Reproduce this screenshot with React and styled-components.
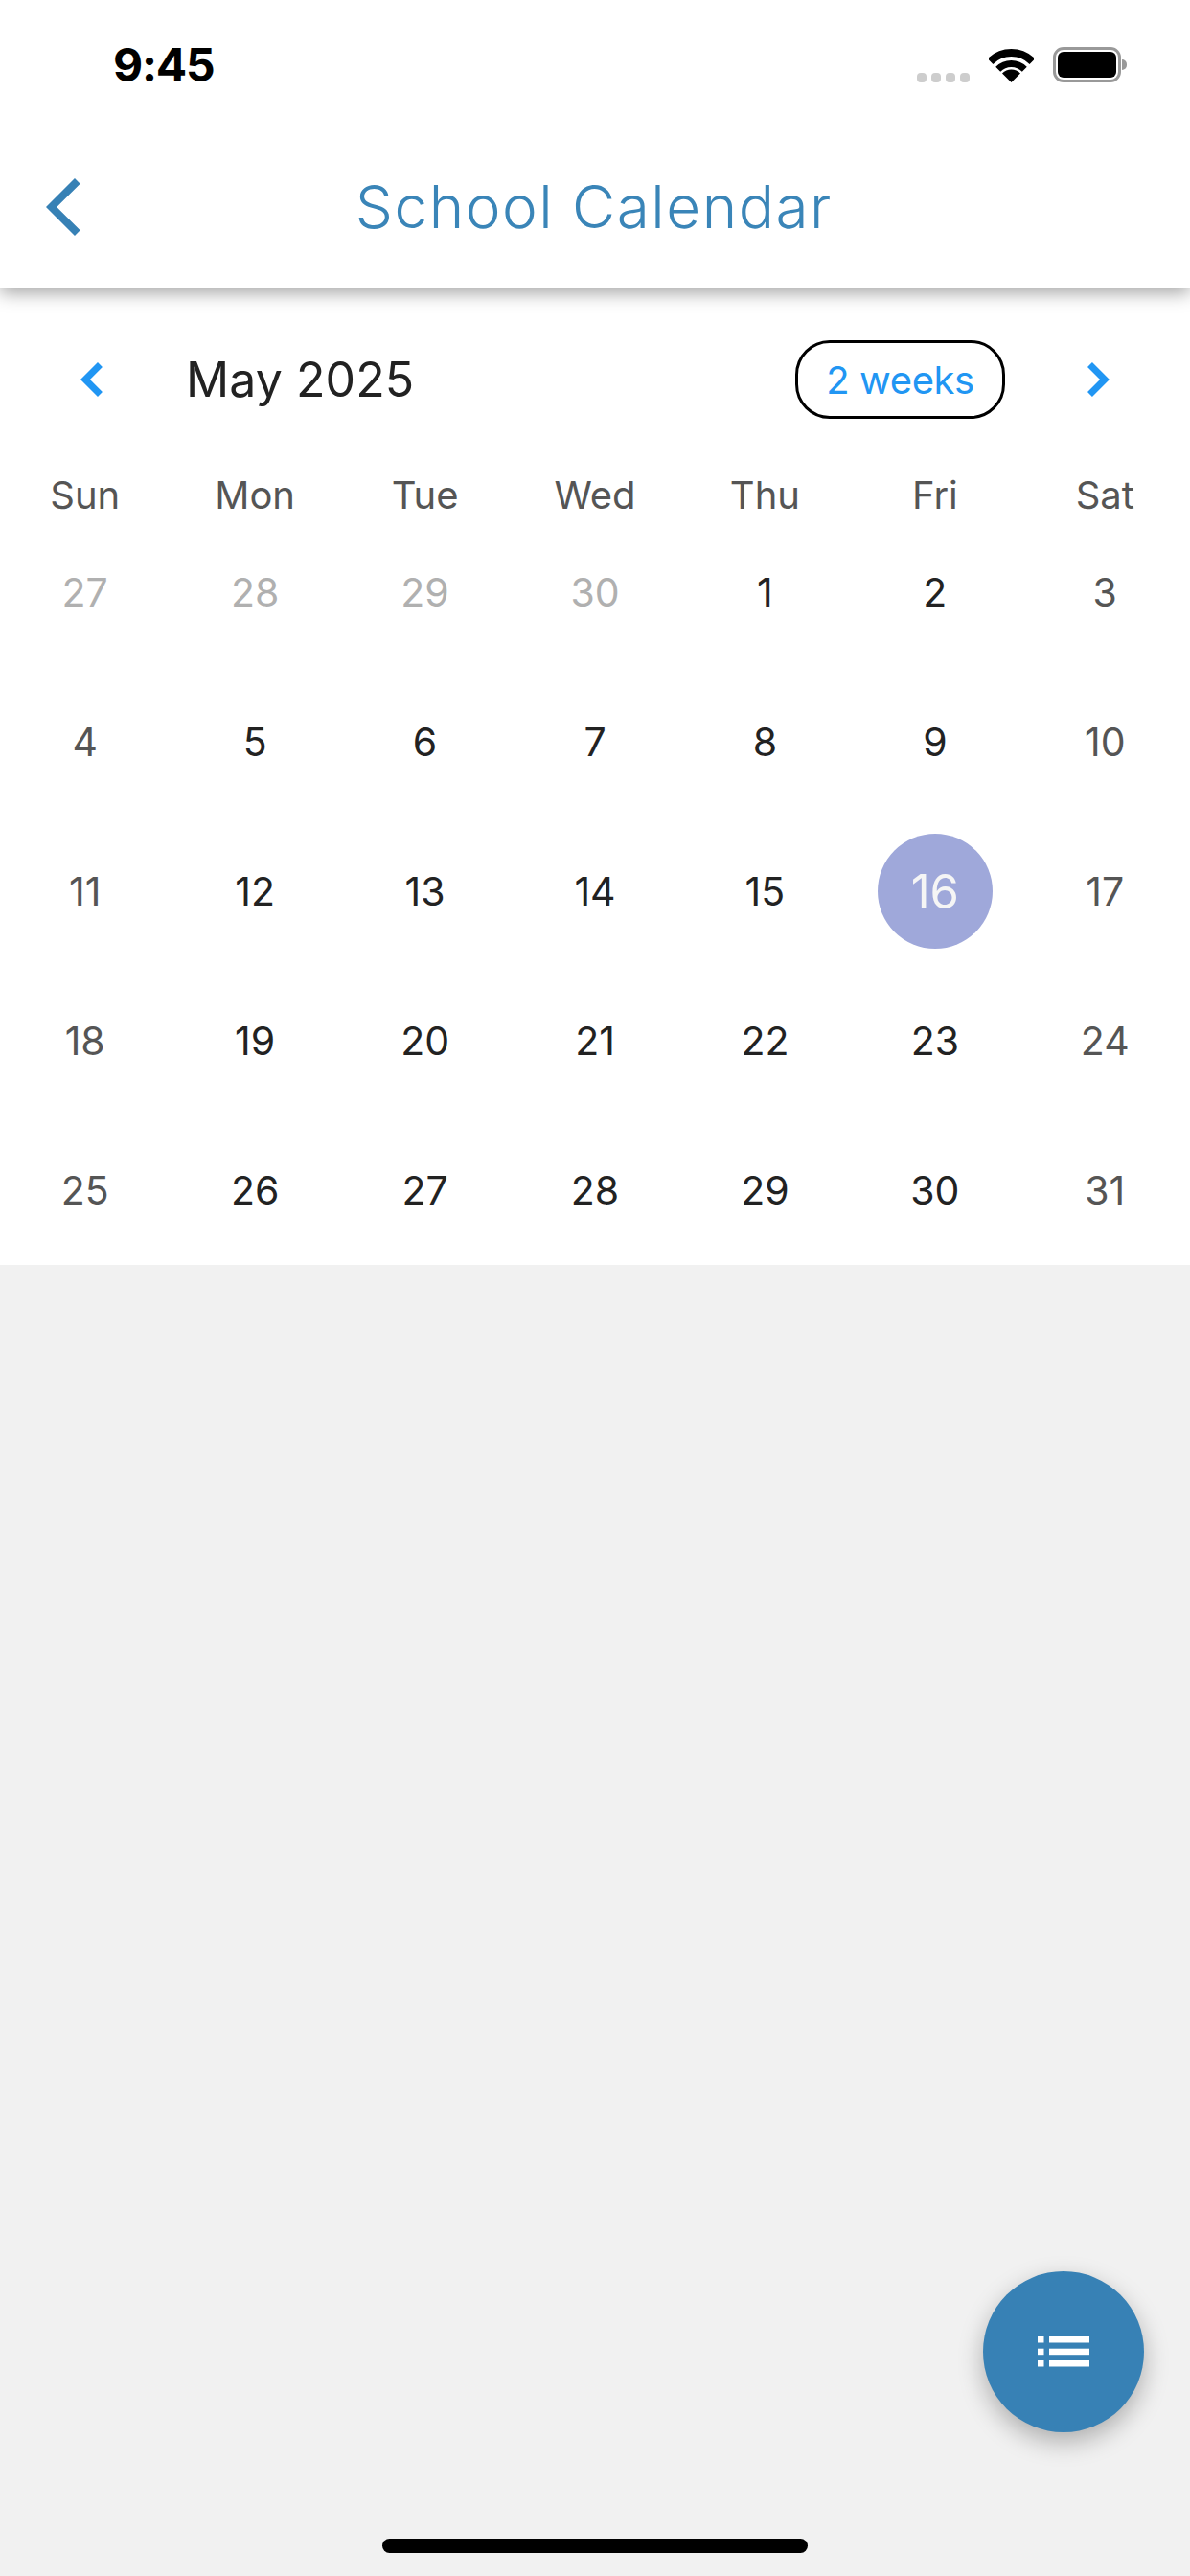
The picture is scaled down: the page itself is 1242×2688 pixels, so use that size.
import React from 'react';
import styled, { createGlobalStyle } from 'styled-components';

const GlobalStyle = createGlobalStyle`
  html, body {
    margin: 0;
    padding: 0;
    background: #f1f1f1;
  }
  * {
    box-sizing: border-box;
  }
`;

const Screen = styled.div`
  position: relative;
  width: 1242px;
  height: 2688px;
  display: flex;
  flex-direction: column;
  overflow: hidden;
  background: #f1f1f1;
  font-family: Inter, "Liberation Sans", sans-serif;
`;

const Header = styled.header`
  position: relative;
  z-index: 2;
  height: 300px;
  display: flex;
  flex-direction: column;
  background: #fff;
  box-shadow: 0 5px 18px rgba(0, 0, 0, 0.38);
`;

const StatusBar = styled.div`
  height: 132px;
  display: flex;
  align-items: flex-start;
  padding: 49px 72px 0 118px;
`;

const Clock = styled.div`
  font-size: 48px;
  line-height: 37px;
  font-weight: 700;
  letter-spacing: -1.2px;
  color: #000;
`;

const StatusIcons = styled.div`
  margin-left: auto;
  display: flex;
  align-items: flex-end;
  height: 37px;
`;

const Signal = styled.div`
  display: flex;
  gap: 5px;
  margin-right: 20px;
`;

const SignalDot = styled.span`
  width: 10px;
  height: 10px;
  border-radius: 4px;
  background: #cdcdcd;
`;

const Battery = styled.div`
  position: relative;
  width: 71px;
  height: 37px;
  margin-left: 20px;
  padding: 2px;
  border: 3px solid #999;
  border-radius: 11px;

  &::before {
    content: '';
    display: block;
    height: 100%;
    border-radius: 6px;
    background: #000;
  }

  &::after {
    content: '';
    position: absolute;
    top: 10px;
    right: -9px;
    width: 5px;
    height: 11px;
    border-radius: 0 5px 5px 0;
    background: #999;
  }
`;

const NavBar = styled.div`
  flex: 1;
  display: flex;
  align-items: center;
  padding: 0 51px 0 48px;
`;

const Title = styled.h1`
  flex: 1;
  margin: 0;
  text-align: center;
  font-size: 62px;
  line-height: 72px;
  font-weight: 300;
  letter-spacing: 1.5px;
  color: #3a85b8;
`;

const NavSpacer = styled.div`
  width: 35px;
`;

const Calendar = styled.section`
  height: 1020px;
  background: #fff;
`;

const MonthRow = styled.div`
  height: 137px;
  display: flex;
  align-items: flex-start;
  padding: 55px 84px 0;
`;

const MonthNav = styled.div`
  display: flex;
  align-items: center;
  height: 82px;
`;

const MonthLabel = styled.div`
  margin-left: 87px;
  height: 82px;
  font-size: 50px;
  line-height: 82px;
  font-weight: 400;
  letter-spacing: 0.1px;
  color: #222;
`;

const RangeButton = styled.button`
  margin-left: auto;
  margin-right: 86px;
  width: 219px;
  height: 82px;
  padding: 0;
  border: 3px solid #000;
  border-radius: 36px;
  background: #fff;
  font-family: inherit;
  font-size: 40px;
  font-weight: 400;
  letter-spacing: -0.4px;
  color: #2196f3;
`;

const WeekHeader = styled.div`
  display: grid;
  grid-template-columns: repeat(7, 1fr);
  height: 103px;
  padding-top: 60px;
`;

const WeekDay = styled.div`
  height: 40px;
  text-align: center;
  font-size: 40px;
  line-height: 40px;
  color: #555;
`;

const DayGrid = styled.div`
  display: grid;
  grid-template-columns: repeat(7, 1fr);
  grid-auto-rows: 156px;
`;

const DAY_COLORS = {
  outside: '#b0b0b0',
  weekend: '#555',
  normal: '#222',
};

const DayCell = styled.div`
  display: flex;
  align-items: center;
  justify-content: center;
  font-size: 41px;
  color: ${(p) => DAY_COLORS[p.$kind]};
`;

const SelectedDay = styled.div`
  width: 120px;
  height: 120px;
  display: flex;
  align-items: center;
  justify-content: center;
  border-radius: 50%;
  background: #9fa8da;
  font-size: 49px;
  color: #f5f5f5;
`;

const Fab = styled.button`
  position: absolute;
  right: 48px;
  bottom: 150px;
  width: 168px;
  height: 168px;
  display: flex;
  align-items: center;
  justify-content: center;
  padding: 0;
  border: 0;
  border-radius: 50%;
  background: #3781b5;
  box-shadow: 0 10px 26px rgba(0, 0, 0, 0.28);
`;

const HomeIndicator = styled.div`
  position: absolute;
  left: 399px;
  bottom: 24px;
  width: 444px;
  height: 15px;
  border-radius: 8px;
  background: #000;
`;

// 45 degree chevron with square ends, size follows from the height and stroke
const Chevron = ({ left, height, stroke, color }) => {
  const arm = (height - stroke * 0.707) / 2;
  const width = stroke * 1.061 + arm;
  const tipX = stroke * 0.707;
  const endX = tipX + arm;
  const d = left
    ? `M${endX} ${height / 2 - arm}L${tipX} ${height / 2}L${endX} ${height / 2 + arm}`
    : `M${width - endX} ${height / 2 - arm}L${width - tipX} ${height / 2}L${width - endX} ${height / 2 + arm}`;
  return (
    <svg width={width} height={height} viewBox={`0 0 ${width} ${height}`}>
      <path d={d} fill="none" stroke={color} strokeWidth={stroke} />
    </svg>
  );
};

const Wifi = () => (
  <svg width="47" height="36" viewBox="0 0 47 36">
    <path d="M1.6 14.1A31 31 0 0 1 45.4 14.1" fill="none" stroke="#000" strokeWidth="8" />
    <path d="M9.7 22.2A19.5 19.5 0 0 1 37.3 22.2" fill="none" stroke="#000" strokeWidth="7" />
    <path d="M23.5 36L14 26.5A13.4 13.4 0 0 1 33 26.5Z" fill="#000" />
  </svg>
);

const ListIcon = () => (
  <svg width="54" height="32" viewBox="0 0 54 32" fill="#fff">
    <rect x="0" y="0" width="6.5" height="6.5" />
    <rect x="12" y="0" width="42" height="6.5" />
    <rect x="0" y="12.7" width="6.5" height="6.5" />
    <rect x="12" y="12.7" width="42" height="6.5" />
    <rect x="0" y="25" width="6.5" height="6.5" />
    <rect x="12" y="25" width="42" height="6.5" />
  </svg>
);

const weekDays = ['Sun', 'Mon', 'Tue', 'Wed', 'Thu', 'Fri', 'Sat'];
const days = [27, 28, 29, 30, ...Array.from({ length: 31 }, (_, i) => i + 1)];

function dayKind(index) {
  if (index < 4) return 'outside';
  if (index % 7 === 0 || index % 7 === 6) return 'weekend';
  return 'normal';
}

function App() {
  return (
    <Screen>
      <GlobalStyle />
      <Header>
        <StatusBar>
          <Clock>9:45</Clock>
          <StatusIcons>
            <Signal>
              <SignalDot />
              <SignalDot />
              <SignalDot />
              <SignalDot />
            </Signal>
            <Wifi />
            <Battery />
          </StatusIcons>
        </StatusBar>
        <NavBar>
          <Chevron left height={60} stroke={8} color="#3781b5" />
          <Title>School Calendar</Title>
          <NavSpacer />
        </NavBar>
      </Header>

      <Calendar>
        <MonthRow>
          <MonthNav>
            <Chevron left height={36} stroke={7} color="#2196f3" />
          </MonthNav>
          <MonthLabel>May 2025</MonthLabel>
          <RangeButton>2 weeks</RangeButton>
          <MonthNav>
            <Chevron height={36} stroke={7} color="#2196f3" />
          </MonthNav>
        </MonthRow>

        <WeekHeader>
          {weekDays.map((d) => (
            <WeekDay key={d}>{d}</WeekDay>
          ))}
        </WeekHeader>

        <DayGrid>
          {days.map((d, i) => (
            <DayCell key={i} $kind={dayKind(i)}>
              {d === 16 && i > 4 ? <SelectedDay>{d}</SelectedDay> : d}
            </DayCell>
          ))}
        </DayGrid>
      </Calendar>

      <Fab>
        <ListIcon />
      </Fab>
      <HomeIndicator />
    </Screen>
  );
}

export default App;
